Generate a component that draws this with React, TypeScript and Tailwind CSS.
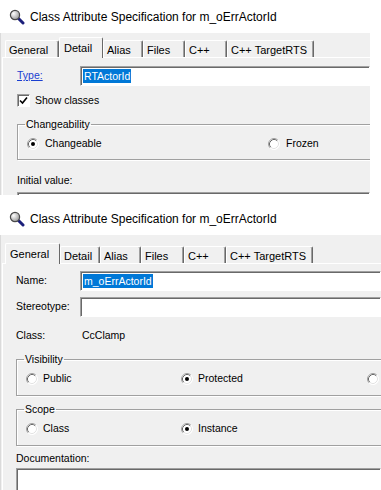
import * as React from "react";

const font = "font-['Liberation_Sans',Arial,sans-serif]";
const sunken =
	"bg-white border border-t-[#a0a0a0] border-l-[#a0a0a0] border-b-white border-r-white shadow-[inset_1px_1px_0_#696969]";
const etched =
	"border border-[#a0a0a0] shadow-[1px_1px_0_#ffffff,inset_1px_1px_0_#ffffff]";

function SearchIcon() {
	return (
		<svg width="16" height="16" viewBox="0 0 16 16" className="shrink-0">
			<defs>
				<radialGradient id="lens" cx="0.35" cy="0.35" r="0.7">
					<stop offset="0" stopColor="#ffffff" />
					<stop offset="1" stopColor="#9a9a9a" />
				</radialGradient>
			</defs>
			<line x1="9" y1="9" x2="14" y2="14" stroke="#1b1f7a" strokeWidth="3" strokeLinecap="round" />
			<circle cx="6" cy="6" r="4.6" fill="url(#lens)" stroke="#4a4a4a" strokeWidth="1.2" />
		</svg>
	);
}

function Radio({ checked }: { checked?: boolean }) {
	return (
		<svg width="12" height="12" viewBox="0 0 12 12" className="shrink-0">
			<circle cx="6" cy="6" r="5.5" fill="#ffffff" />
			<path d="M2.11 9.89 A5.5 5.5 0 0 1 9.89 2.11" fill="none" stroke="#a0a0a0" />
			<path d="M9.89 2.11 A5.5 5.5 0 0 1 2.11 9.89" fill="none" stroke="#ffffff" />
			<path d="M2.82 9.18 A4.5 4.5 0 0 1 9.18 2.82" fill="none" stroke="#696969" />
			<path d="M9.18 2.82 A4.5 4.5 0 0 1 2.82 9.18" fill="none" stroke="#e3e3e3" />
			{checked && <circle cx="6" cy="6" r="2" fill="#000000" />}
		</svg>
	);
}

function Checkbox() {
	return (
		<div className={`w-[13px] h-[13px] shrink-0 ${sunken} flex items-center justify-center`}>
			<svg width="9" height="9" viewBox="0 0 9 9">
				<path d="M1 4.5 L3.5 7 L8 1.5" fill="none" stroke="#000" strokeWidth="1.6" />
			</svg>
		</div>
	);
}

function TitleBar({ h }: { h: string }) {
	return (
		<div className={`flex items-center gap-[5px] pl-[9px] bg-white ${h}`}>
			<SearchIcon />
			<span className="text-[12px] leading-none text-black">
				Class Attribute Specification for m_oErrActorId
			</span>
		</div>
	);
}

type Tab = { label: string; w: string };

function TabStrip({ tabs, active, pt }: { tabs: Tab[]; active: string; pt: string }) {
	return (
		<div className={`flex items-end pl-[3px] ${pt}`}>
			{tabs.map((t) =>
				t.label === active ? (
					<div
						key={t.label}
						className={`${t.w} h-[21px] mb-[-1px] relative z-10 bg-[#f0f0f0] border-t border-l border-t-white border-l-white border-r border-r-[#696969] rounded-t-[2px] pl-[4px] pt-[2px] text-[11px]`}
					>
						{t.label}
					</div>
				) : (
					<div
						key={t.label}
						className={`${t.w} h-[17px] border-t border-l border-t-white border-l-white border-r border-r-[#696969] shadow-[inset_-1px_0_0_#a0a0a0] rounded-t-[2px] pl-[3px] pt-[1px] text-[11px]`}
					>
						{t.label}
					</div>
				),
			)}
		</div>
	);
}

function DetailDialog() {
	const tabs: Tab[] = [
		{ label: "General", w: "w-[54px]" },
		{ label: "Detail", w: "w-[44px]" },
		{ label: "Alias", w: "w-[40px]" },
		{ label: "Files", w: "w-[42px]" },
		{ label: "C++", w: "w-[42px]" },
		{ label: "C++ TargetRTS", w: "w-[87px]" },
	];
	return (
		<div className="w-[370px] h-[195px] overflow-hidden bg-white">
			<TitleBar h="h-[33px]" />
			<div className="h-[162px] bg-[#f0f0f0] border-l border-l-[#dadada] pl-[1px]">
				<TabStrip tabs={tabs} active="Detail" pt="h-[24px] pt-[4px]" />
				<div className="border-t border-l border-white pl-[14px] pt-[8px] text-[10.5px] text-black">
					<div className="flex items-center h-[20px]">
						<span className="w-[63px] text-[#1a3fd0] underline">Type:</span>
						<div className={`flex-1 h-[20px] ${sunken} flex items-center pl-[2px]`}>
							<span className="bg-[#0078d7] text-white leading-[14px] px-[1px]">RTActorId</span>
						</div>
					</div>
					<div className="flex items-center gap-[5px] mt-[8px] h-[13px]">
						<Checkbox />
						<span>Show classes</span>
					</div>
					<fieldset className={`mt-[11px] w-[380px] ${etched} pb-[9px]`}>
						<legend className="ml-[7px] px-[1px] leading-[13px]">Changeability</legend>
						<div className="flex items-center pl-[9px] pt-[6px] h-[19px]">
							<div className="w-[241px] flex items-center gap-[6px]">
								<Radio checked />
								<span>Changeable</span>
							</div>
							<div className="flex items-center gap-[6px]">
								<Radio />
								<span>Frozen</span>
							</div>
						</div>
					</fieldset>
					<div className="mt-[14px] leading-[13px]">Initial value:</div>
					<div className={`mt-[5px] h-[20px] ${sunken}`} />
				</div>
			</div>
		</div>
	);
}

function GeneralDialog() {
	const tabs: Tab[] = [
		{ label: "General", w: "w-[55px]" },
		{ label: "Detail", w: "w-[40px]" },
		{ label: "Alias", w: "w-[41px]" },
		{ label: "Files", w: "w-[43px]" },
		{ label: "C++", w: "w-[42px]" },
		{ label: "C++ TargetRTS", w: "w-[87px]" },
	];
	return (
		<div className="w-[381px] h-[295px] overflow-hidden bg-white">
			<TitleBar h="h-[40px] pt-[8px]" />
			<div className="h-[255px] bg-[#f0f0f0] border-l border-l-[#dadada] pl-[1px]">
				<TabStrip tabs={tabs} active="General" pt="h-[28px] pt-[7px]" />
				<div className="border-t border-l border-white pl-[13px] pt-[7px] text-[10.5px] text-black">
					<div className="flex items-center h-[20px]">
						<span className="w-[64px]">Name:</span>
						<div className={`flex-1 h-[20px] ${sunken} flex items-center pl-[2px]`}>
							<span className="bg-[#0078d7] text-white leading-[14px] px-[1px]">m_oErrActorId</span>
						</div>
					</div>
					<div className="flex items-center h-[20px] mt-[6px]">
						<span className="w-[64px]">Stereotype:</span>
						<div className={`flex-1 h-[20px] ${sunken}`} />
					</div>
					<div className="flex items-center mt-[12px] leading-[13px]">
						<span className="w-[66px]">Class:</span>
						<span>CcClamp</span>
					</div>
					<fieldset className={`mt-[11px] w-[390px] ${etched} pb-[10px]`}>
						<legend className="ml-[7px] px-[1px] leading-[13px]">Visibility</legend>
						<div className="flex items-center pl-[9px] pt-[6px] h-[19px]">
							<div className="w-[155px] flex items-center gap-[5px]">
								<Radio />
								<span>Public</span>
							</div>
							<div className="w-[186px] flex items-center gap-[5px]">
								<Radio checked />
								<span>Protected</span>
							</div>
							<Radio />
						</div>
					</fieldset>
					<fieldset className={`mt-[7px] w-[390px] ${etched} pb-[10px]`}>
						<legend className="ml-[7px] px-[1px] leading-[13px]">Scope</legend>
						<div className="flex items-center pl-[9px] pt-[6px] h-[19px]">
							<div className="w-[155px] flex items-center gap-[5px]">
								<Radio />
								<span>Class</span>
							</div>
							<div className="flex items-center gap-[5px]">
								<Radio checked />
								<span>Instance</span>
							</div>
						</div>
					</fieldset>
					<div className="mt-[6px] leading-[13px]">Documentation:</div>
					<div className={`mt-[3px] h-[40px] ${sunken}`} />
				</div>
			</div>
		</div>
	);
}

export default function App() {
	return (
		<div className={`w-[381px] h-[490px] overflow-hidden bg-white ${font}`}>
			<DetailDialog />
			<GeneralDialog />
		</div>
	);
}
